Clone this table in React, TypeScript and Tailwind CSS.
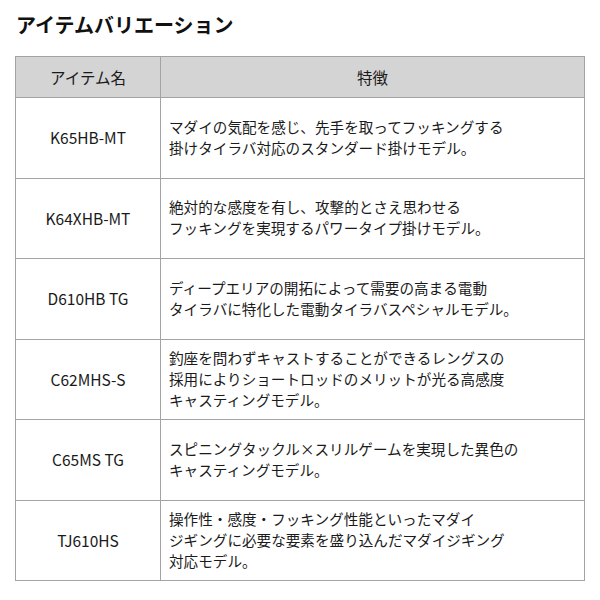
const rows: { name: string; lines: string[] }[] = [
  {
    name: 'K65HB-MT',
    lines: ['マダイの気配を感じ、先手を取ってフッキングする', '掛けタイラバ対応のスタンダード掛けモデル。'],
  },
  {
    name: 'K64XHB-MT',
    lines: ['絶対的な感度を有し、攻撃的とさえ思わせる', 'フッキングを実現するパワータイプ掛けモデル。'],
  },
  {
    name: 'D610HB TG',
    lines: ['ディープエリアの開拓によって需要の高まる電動', 'タイラバに特化した電動タイラバスペシャルモデル。'],
  },
  {
    name: 'C62MHS-S',
    lines: [
      '釣座を問わずキャストすることができるレングスの',
      '採用によりショートロッドのメリットが光る高感度',
      'キャスティングモデル。',
    ],
  },
  {
    name: 'C65MS TG',
    lines: ['スピニングタックル×スリルゲームを実現した異色の', 'キャスティングモデル。'],
  },
  {
    name: 'TJ610HS',
    lines: [
      '操作性・感度・フッキング性能といったマダイ',
      'ジギングに必要な要素を盛り込んだマダイジギング',
      '対応モデル。',
    ],
  },
];

export default function App() {
  return (
    <div
      className="h-[600px] w-[600px] bg-white px-[15px] pt-[11px] text-[#1a1a1a]"
      style={{ fontFamily: '"Noto Sans CJK JP", "Noto Sans", sans-serif' }}
    >
      <h1 className="pl-[1px] text-[20px] font-bold leading-[28px] text-[#111]">
        アイテムバリエーション
      </h1>
      <table className="mt-[17px] w-[570px] border-collapse text-[14.6px] leading-[21px]">
        <thead>
          <tr className="h-[41px] bg-[#d4d4d4] text-[15.5px]">
            <th className="w-[145px] border border-[#a3a3a3] font-normal">アイテム名</th>
            <th className="border border-[#a3a3a3] font-normal">特徴</th>
          </tr>
        </thead>
        <tbody>
          {rows.map((row) => (
            <tr key={row.name} className="h-[80.5px]">
              <td className="border border-[#a3a3a3] text-center text-[15.5px]">{row.name}</td>
              <td className="border border-[#a3a3a3] pl-[8px] pb-[2px]">
                {row.lines.map((line) => (
                  <div key={line}>{line}</div>
                ))}
              </td>
            </tr>
          ))}
        </tbody>
      </table>
    </div>
  );
}
